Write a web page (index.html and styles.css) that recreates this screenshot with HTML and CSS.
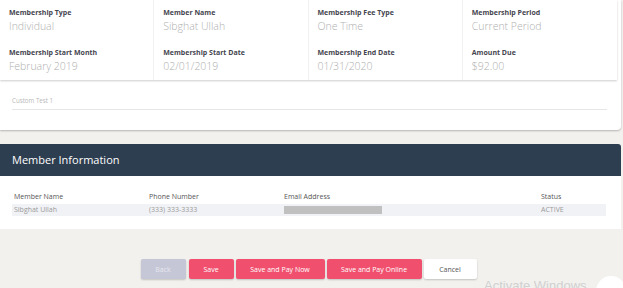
FILE: index.html
```html
<!DOCTYPE html>
<html lang="en">

<head>
  <meta charset="UTF-8" />
  <meta name="viewport" content="width=device-width, initial-scale=1.0" />
  <title>Membership</title>
  <link rel="stylesheet" href="styles.css">
</head>

<body>
  <div class="page">
    <div class="card">
      <div class="fields">
        <div class="field">
          <div class="label">Membership Type</div>
          <div class="value">Individual</div>
        </div>
        <div class="field">
          <div class="label">Member Name</div>
          <div class="value">Sibghat Ullah</div>
        </div>
        <div class="field">
          <div class="label">Membership Fee Type</div>
          <div class="value">One Time</div>
        </div>
        <div class="field">
          <div class="label">Membership Period</div>
          <div class="value">Current Period</div>
        </div>
        <div class="field">
          <div class="label">Membership Start Month</div>
          <div class="value">February 2019</div>
        </div>
        <div class="field">
          <div class="label">Membership Start Date</div>
          <div class="value">02/01/2019</div>
        </div>
        <div class="field">
          <div class="label">Membership End Date</div>
          <div class="value">01/31/2020</div>
        </div>
        <div class="field">
          <div class="label">Amount Due</div>
          <div class="value">$92.00</div>
        </div>
      </div>
      <div class="custom">Custom Test 1</div>
    </div>

    <div class="panel">
      <div class="panel-head">Member Information</div>
      <div class="panel-body">
        <div class="row row-head">
          <span>Member Name</span>
          <span>Phone Number</span>
          <span>Email Address</span>
          <span>Status</span>
        </div>
        <div class="row row-data">
          <span>Sibghat Ullah</span>
          <span>(333) 333-3333</span>
          <span><i class="redacted"></i></span>
          <span>ACTIVE</span>
        </div>
      </div>
    </div>

    <div class="actions">
      <button class="btn btn-back">Back</button>
      <button class="btn btn-red w45">Save</button>
      <button class="btn btn-red w89">Save and Pay Now</button>
      <button class="btn btn-red w95">Save and Pay Online</button>
      <button class="btn btn-cancel">Cancel</button>
    </div>
  </div>

  <div class="watermark">Activate Windows</div>
  <div class="bubble"></div>
</body>

</html>
```

FILE: styles.css
```css
* {
  margin: 0;
  padding: 0;
  box-sizing: border-box;
}

body {
  background: #f2f1ee;
  font-family: "Open Sans", "DejaVu Sans", sans-serif;
  width: 623px;
  height: 288px;
  overflow: hidden;
  position: relative;
}

.page {
  width: 621px;
}

.card {
  background: #fff;
  border-radius: 0 0 4px 0;
  box-shadow: 0 1px 2px rgba(0, 0, 0, 0.25);
  padding-bottom: 20px;
}

.fields {
  width: 617px;
  display: grid;
  grid-template-columns: repeat(4, 1fr);
  box-shadow: 0 1px 2px rgba(0, 0, 0, 0.2);
}

.field {
  height: 40px;
  padding: 7px 11px 0 9px;
  border-right: 1px solid #f0f0f0;
}

.field:nth-child(4n) {
  border-right: none;
}

.label {
  font-size: 7px;
  font-weight: 700;
  line-height: 11px;
  color: #45454f;
}

.value {
  font-size: 10.5px;
  font-weight: 300;
  line-height: 16px;
  color: #b0b0b0;
}

.custom {
  margin: 16px 14px 0 12px;
  padding-bottom: 3px;
  font-size: 6.2px;
  line-height: 10px;
  color: #b8b8b8;
  border-bottom: 1px solid #e6e6e6;
}

.panel {
  margin-top: 14px;
  background: #fff;
  border-radius: 0 3px 0 0;
}

.panel-head {
  height: 32px;
  line-height: 32px;
  padding-left: 12px;
  background: #2d3e50;
  color: #fff;
  font-size: 11px;
  font-weight: 500;
  border-radius: 0 3px 0 0;
}

.panel-body {
  padding: 15px 15px 13px 12px;
}

.row {
  display: grid;
  grid-template-columns: 135px 135px 257px 1fr;
  padding-left: 2px;
  font-size: 7px;
}

.row-head {
  line-height: 12px;
  color: #555;
}

.row-data {
  margin-top: 1px;
  line-height: 12px;
  background: #f1f2f6;
  color: #9a9a9a;
}

.redacted {
  display: inline-block;
  width: 98px;
  height: 8px;
  margin-top: 2px;
  vertical-align: top;
  background: #c0c0c0;
}

.actions {
  margin-top: 30px;
  display: flex;
  justify-content: center;
  gap: 2px;
  padding-right: 4px;
}

.btn {
  height: 20px;
  border: none;
  border-radius: 2px;
  font-family: inherit;
  font-size: 7px;
  color: #fff;
  box-shadow: 0 1px 2px rgba(0, 0, 0, 0.2);
}

.btn-back {
  width: 45px;
  margin-right: 1px;
  background: #c5c6d6;
  color: #e8e8f0;
}

.btn-red {
  background: #f0506e;
}

.w45 {
  width: 45px;
}

.w89 {
  width: 89px;
}

.w95 {
  width: 95px;
}

.btn-cancel {
  width: 53px;
  background: #fff;
  color: #555;
}

.watermark {
  position: absolute;
  left: 484px;
  top: 278px;
  font-size: 13px;
  color: #d0d0d0;
  font-family: "Liberation Sans", sans-serif;
}

.bubble {
  position: absolute;
  left: 596px;
  top: 276px;
  width: 30px;
  height: 30px;
  border-radius: 50%;
  background: #fff;
}
```
